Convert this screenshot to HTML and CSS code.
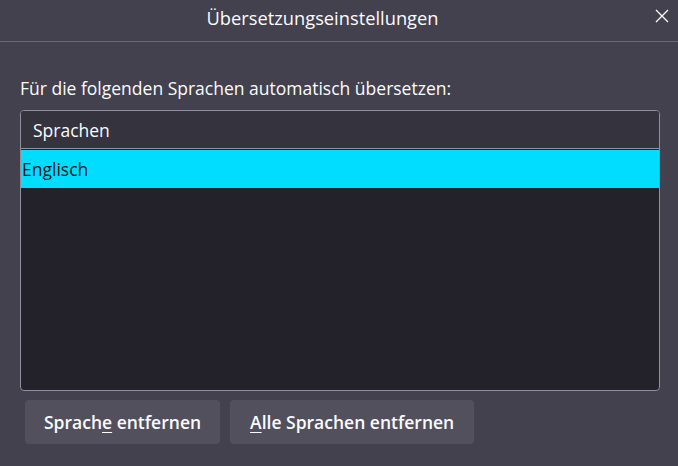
FILE: index.html
```html
<!DOCTYPE html>
<html lang="de">
<head>
<meta charset="utf-8">
<link rel="stylesheet" href="styles.css">
</head>
<body>
<div class="dialog">
  <header class="titlebar">
    <span class="title">Übersetzungseinstellungen</span>
    <svg class="close" width="14" height="14" viewBox="0 0 14 14"><path d="M1 1L13 13M13 1L1 13" stroke="#fbfbfe" stroke-width="1.4" fill="none"/></svg>
  </header>
  <main class="content">
    <p class="label">Für die folgenden Sprachen automatisch übersetzen:</p>
    <div class="listbox">
      <div class="listhead">Sprachen</div>
      <div class="listbody">
        <div class="row selected">Englisch</div>
      </div>
    </div>
    <div class="buttons">
      <button class="btn">Sprach<u>e</u> entfernen</button>
      <button class="btn"><u>A</u>lle Sprachen entfernen</button>
    </div>
  </main>
</div>
</body>
</html>
```
FILE: styles.css
```css
* { box-sizing: border-box; }
html, body { margin: 0; padding: 0; }
body {
  width: 678px;
  height: 466px;
  background: #42414d;
  color: #fbfbfe;
  font-family: "Open Sans", "Noto Sans", sans-serif;
  font-size: 17.5px;
  overflow: hidden;
}
.dialog { display: flex; flex-direction: column; height: 100%; }
.titlebar {
  height: 42px;
  border-bottom: 1px solid #6a6975;
  display: flex;
  align-items: center;
  justify-content: center;
  padding-right: 33px;
  position: relative;
}
.title { font-size: 18.3px; margin-top: -7px; }
.close { position: absolute; right: 9px; top: 9px; }
.content { padding: 0 18px 0 20px; display: flex; flex-direction: column; }
.label { margin: 34px 0 10px; line-height: 24px; }
.listbox {
  height: 281px;
  border: 1px solid #8f8f9d;
  border-radius: 4px;
  background: #23222b;
  overflow: hidden;
  display: flex;
  flex-direction: column;
}
.listhead {
  height: 38px;
  background: #34333e;
  border-bottom: 1px solid #8f8f9d;
  padding-left: 12px;
  display: flex;
  align-items: center;
}
.listbody { flex: 1; }
.row { height: 38px; display: flex; align-items: center; padding-left: 1px; margin-top: 1px; }
.row.selected { background: #00ddff; color: #15141a; }
.buttons { display: flex; gap: 10px; margin-top: 9px; padding-left: 5px; }
.btn {
  font: inherit;
  font-weight: 600;
  color: #fbfbfe;
  background: #52505d;
  border: none;
  border-radius: 4px;
  height: 44px;
  padding: 0 19px;
}
.btn + .btn { padding: 0 20px; }
.btn u { text-underline-offset: 3px; }
```
